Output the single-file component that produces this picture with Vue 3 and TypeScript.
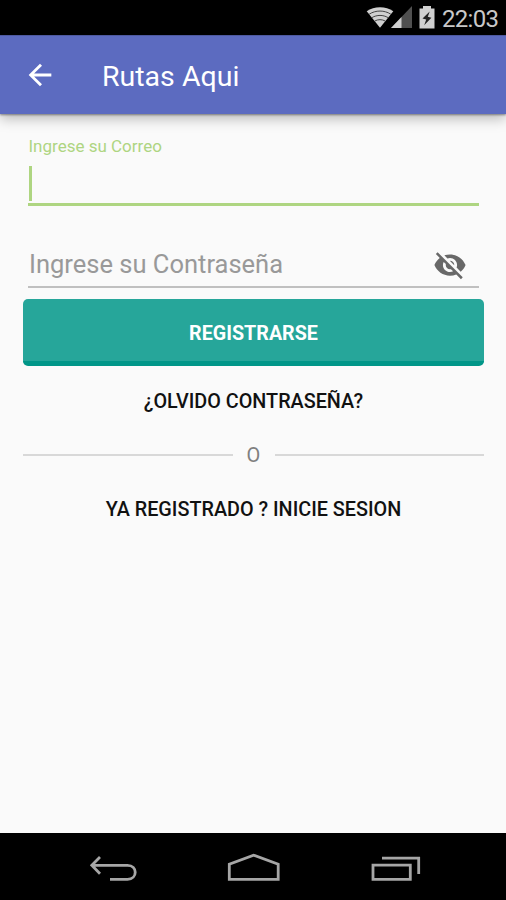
<script setup lang="ts">
import { ref } from 'vue'

const clock = ref('22:03')
const title = ref('Rutas Aqui')
</script>

<template>
  <div class="screen">
    <header class="status-bar">
      <svg class="wifi" width="28" height="22" viewBox="0 0 28 22">
        <path d="M0.7 5.2C8 -0.2 20 -0.2 27.3 5.2L14 21.8Z" fill="#d0d0d0" />
        <g fill="none" stroke="#444" stroke-width="1">
          <path d="M3.2 8.2C9.5 4 18.5 4 24.8 8.2" />
          <path d="M6 11.6C10.8 8.7 17.2 8.7 22 11.6" />
          <path d="M8.8 15C12 13.2 16 13.2 19.2 15" />
        </g>
      </svg>
      <svg class="signal" width="21" height="22" viewBox="0 0 21 22">
        <path d="M0 22L21 0V22Z" fill="#505050" />
        <path d="M0 22L10.5 11V22Z" fill="#d0d0d0" />
      </svg>
      <svg class="battery" width="16" height="23" viewBox="0 0 16 23">
        <path d="M4 0H12V2.5H15.5V22.5H0.5V2.5H4Z" fill="#d0d0d0" />
        <path d="M10.7 5.5L3.5 12.5L7.2 13.6L5.2 19.2L12.4 11.8L8.8 10.8Z" fill="#222" />
      </svg>
      <span class="clock">{{ clock }}</span>
    </header>

    <div class="app-bar">
      <svg class="back" width="34" height="34" viewBox="0 0 24 24">
        <path d="M20 11H7.83l5.59-5.59L12 4l-8 8 8 8 1.41-1.41L7.83 13H20v-2z" fill="#fff" />
      </svg>
      <h1 class="title">{{ title }}</h1>
    </div>

    <main class="content">
      <div class="field email">
        <label class="label">Ingrese su Correo</label>
        <div class="input"><span class="caret"></span></div>
      </div>
      <div class="field password">
        <span class="placeholder">Ingrese su Contraseña</span>
        <svg class="eye" width="34" height="34" viewBox="0 0 24 24">
          <path
            fill="#686868"
            d="M12 7c2.76 0 5 2.24 5 5 0 .65-.13 1.26-.36 1.83l2.92 2.92c1.51-1.26 2.7-2.89 3.43-4.75-1.73-4.39-6-7.5-11-7.5-1.4 0-2.74.25-3.98.7l2.16 2.16C10.74 7.13 11.35 7 12 7zM2 4.27l2.28 2.28.46.46C3.08 8.3 1.78 10.02 1 12c1.73 4.39 6 7.5 11 7.5 1.55 0 3.03-.3 4.38-.84l.42.42L19.73 22 21 20.73 3.27 3 2 4.27zM7.53 9.8l1.55 1.55c-.05.21-.08.43-.08.65 0 1.66 1.34 3 3 3 .22 0 .44-.03.65-.08l1.55 1.55c-.67.33-1.41.53-2.2.53-2.76 0-5-2.24-5-5 0-.79.2-1.53.53-2.2zm4.31-.78l3.15 3.15.02-.16c0-1.66-1.34-3-3-3l-.17.01z"
          />
        </svg>
      </div>
      <button class="submit">REGISTRARSE</button>
      <a class="link forgot">¿OLVIDO CONTRASEÑA?</a>
      <div class="divider"><span class="or">O</span></div>
      <a class="link login">YA REGISTRADO ? INICIE SESION</a>
    </main>

    <nav class="nav-bar">
      <svg width="506" height="67" viewBox="0 0 506 67" fill="none" stroke="#a6a6a6" stroke-width="2.8">
        <path d="M100 24L91.8 32.3L100 40.8M92 32.3H127.5C137.8 32.3 137.8 46.3 127.5 46.3H110" />
        <path d="M229.3 46.3V31.2L253.6 22.2L278.2 31.2V46.3Z" />
        <path d="M373 32.2H410.3V46.3H373ZM382 25.2H418.7V41" />
      </svg>
    </nav>
  </div>
</template>

<style>
body {
  margin: 0;
}
</style>

<style scoped>
.screen {
  width: 506px;
  height: 900px;
  display: flex;
  flex-direction: column;
  overflow: hidden;
  background: #fafafa;
  font-family: Roboto, sans-serif;
}
.status-bar {
  height: 35px;
  flex: none;
  display: flex;
  justify-content: flex-end;
  align-items: flex-start;
  box-sizing: border-box;
  padding: 6px 8px 0 0;
  background: #000;
}
.wifi {
  flex: none;
}
.signal {
  margin-left: -3px;
}
.battery {
  margin-left: 7px;
}
.clock {
  width: 56px;
  margin-left: 7px;
  color: #c8c8c8;
  font-size: 24px;
  line-height: 26px;
  letter-spacing: -0.7px;
  white-space: nowrap;
}
.app-bar {
  height: 79px;
  flex: none;
  display: flex;
  align-items: center;
  box-sizing: border-box;
  padding-left: 23px;
  background: #5c6bc0;
  border-top: 1px solid #4d59a0;
  box-shadow: 0 1px 2px rgba(0, 0, 0, 0.4), 0 5px 12px rgba(0, 0, 0, 0.25);
}
.title {
  margin: 4px 0 0 45px;
  color: #fff;
  font-size: 28.5px;
  font-weight: 400;
  line-height: 34px;
}
.content {
  flex: 1;
  display: flex;
  flex-direction: column;
  padding: 22px 22px 0 23px;
}
.field {
  margin: 0 5px;
  box-sizing: border-box;
}
.email {
  height: 70px;
  border-bottom: 3px solid #aed581;
}
.label {
  display: block;
  padding-left: 0.5px;
  color: #aed581;
  font-size: 17px;
  line-height: 21px;
}
.input {
  padding: 9px 0 0 1px;
}
.caret {
  display: block;
  width: 2.5px;
  height: 35px;
  background: #aed581;
}
.password {
  display: flex;
  align-items: center;
  justify-content: space-between;
  height: 48px;
  margin-top: 34px;
  padding: 3px 12px 0 1px;
  border-bottom: 2px solid #c0c0c0;
}
.placeholder {
  margin-bottom: 2px;
  color: #999;
  font-size: 25.5px;
  line-height: 32px;
}
.submit {
  height: 67px;
  margin: 11px 0 0;
  padding: 7px 0 0;
  border: 0;
  border-bottom: 5px solid #009688;
  border-radius: 5px;
  background: #26a69a;
  color: #fff;
  font: 700 19.7px Roboto, sans-serif;
}
.link {
  color: #111;
  font-size: 19.8px;
  font-weight: 500;
  line-height: 24px;
  text-align: center;
  white-space: nowrap;
}
.forgot {
  margin-top: 24px;
}
.divider {
  display: flex;
  align-items: center;
  height: 24px;
  margin-top: 29px;
}
.divider::before,
.divider::after {
  content: '';
  flex: 1;
  height: 2px;
  background: #d8d8d8;
}
.or {
  width: 42px;
  color: #808080;
  font-size: 20px;
  text-align: center;
}
.login {
  margin-top: 31px;
}
.nav-bar {
  height: 67px;
  flex: none;
  background: #000;
}
.nav-bar svg {
  display: block;
}
</style>
